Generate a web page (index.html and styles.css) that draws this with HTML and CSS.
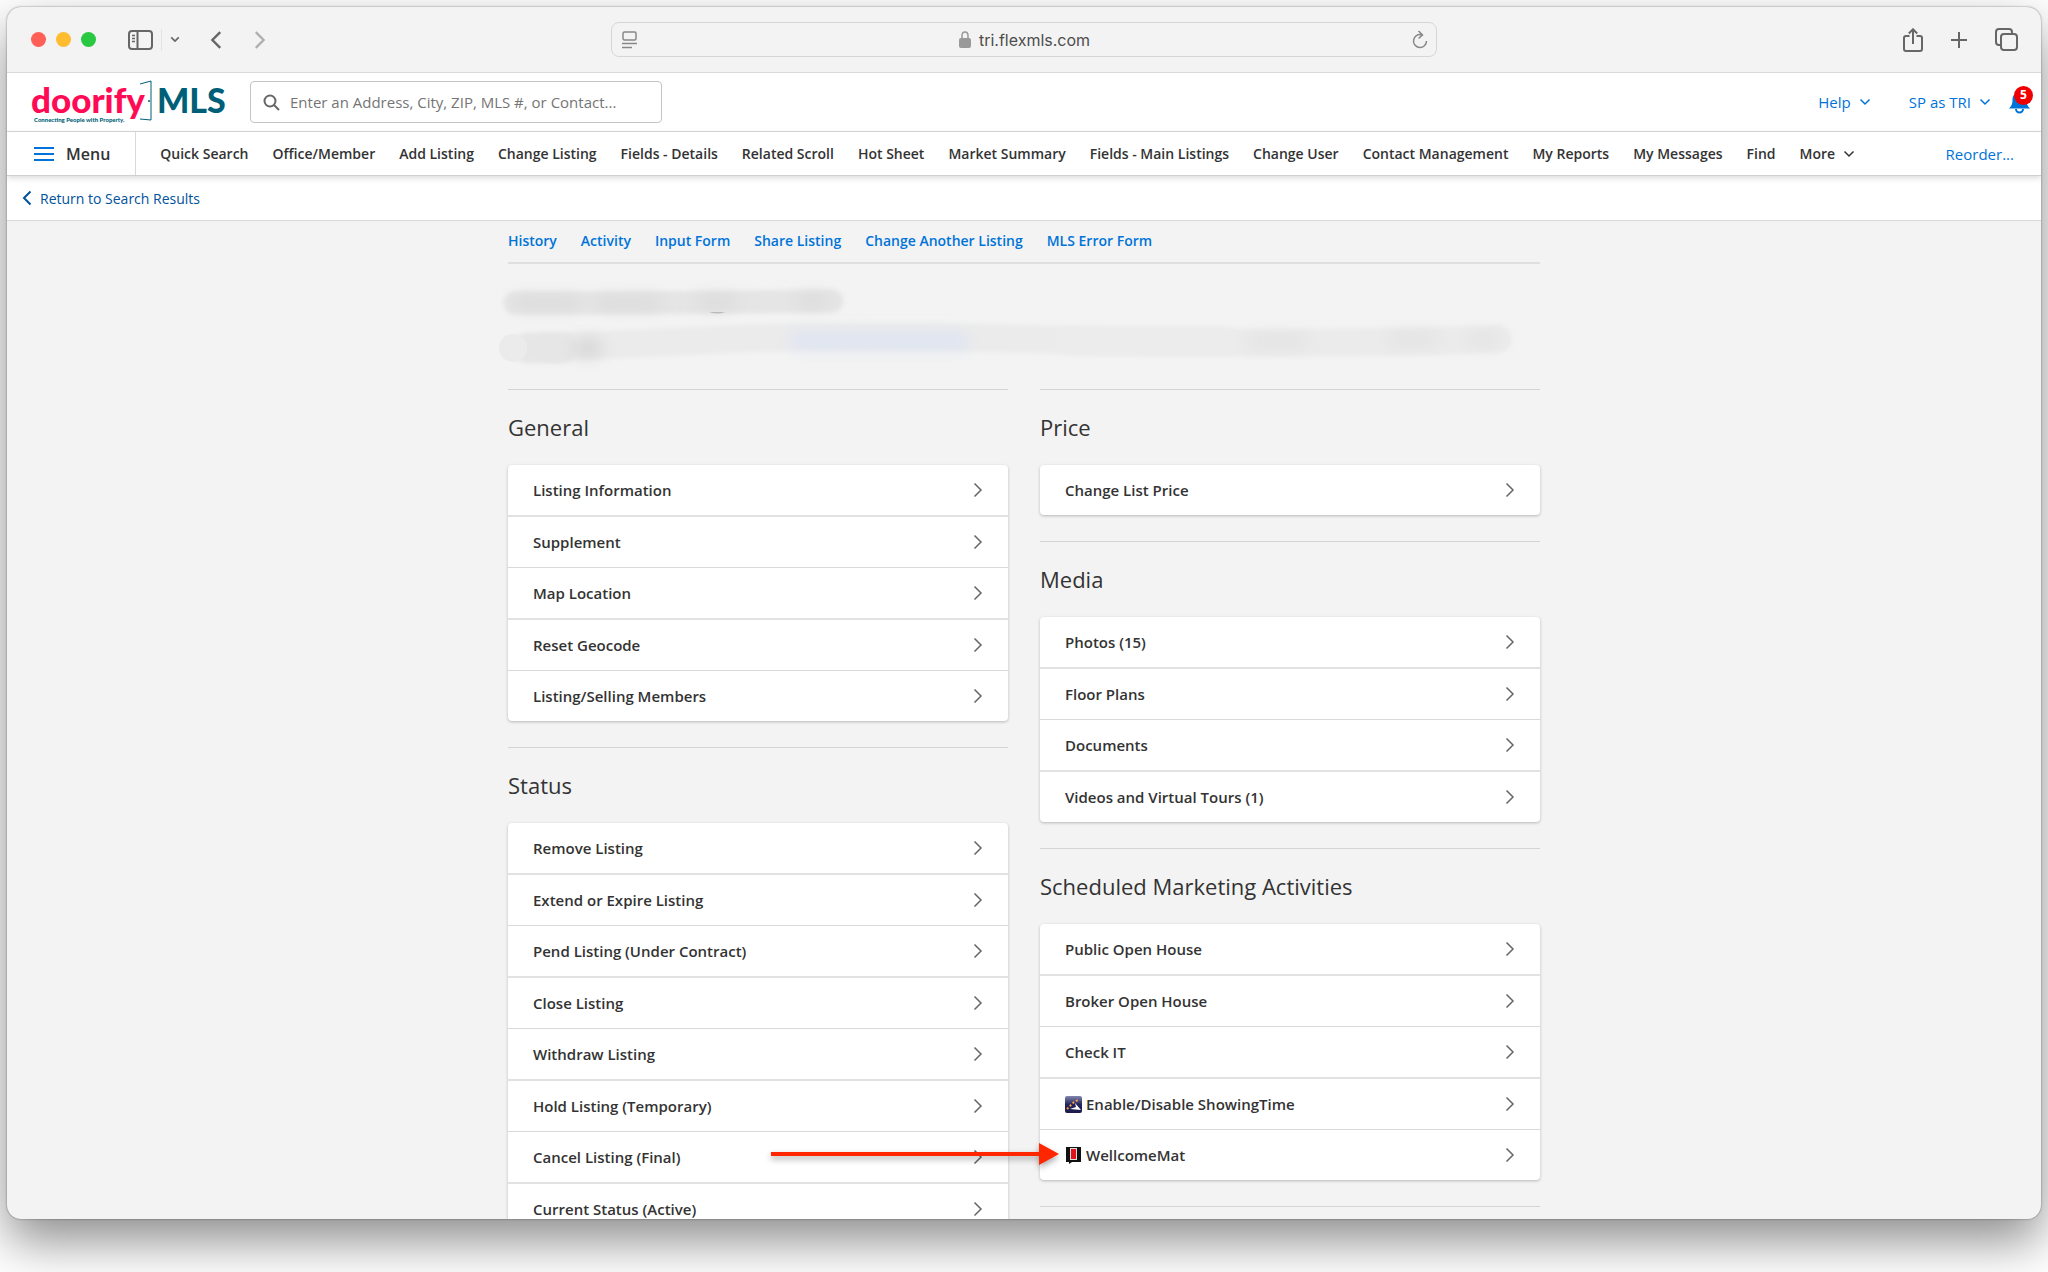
FILE: index.html
```html
<!DOCTYPE html>
<html lang="en">
<head>
  <meta charset="utf-8">
  <title>Flexmls - Change Listing</title>
  <meta name="viewport" content="width=device-width, initial-scale=1">
  <link rel="stylesheet" href="styles.css">
</head>
<body>
  <svg class="sprite" aria-hidden="true">
    <symbol id="chevron-right" viewBox="0 0 10 16"><path d="M1.5 1.5 8 8l-6.500 6.500" /></symbol>
    <symbol id="chevron-left" viewBox="0 0 10 16"><path d="M8.500 1.500 2 8l6.500 6.500" /></symbol>
    <symbol id="chevron-down" viewBox="0 0 12 8"><path d="M1.500 1.500 6 6l4.500-4.500" /></symbol>
  </svg>

  <div class="window">
    <div class="titlebar">
      <div class="titlebar-left">
        <div class="lights"><span class="close"></span><span class="minimize"></span><span class="zoom"></span></div>
        <button class="tool sidebar-button" aria-label="Show sidebar">
          <svg width="25" height="20" viewBox="0 0 25 20"><rect x="1" y="1" width="23" height="18" rx="3" /><path d="M9.500 1v18" /><path class="thin" d="M4 5.500h3M4 8.500h3M4 11.500h3" /></svg>
        </button>
        <button class="tool tab-menu" aria-label="Tab groups"><svg width="10" height="7" viewBox="0 0 12 8"><use href="#chevron-down" /></svg></button>
        <button class="tool back" aria-label="Back"><svg width="12" height="20" viewBox="0 0 10 16"><use href="#chevron-left" /></svg></button>
        <button class="tool forward" aria-label="Forward"><svg width="12" height="20" viewBox="0 0 10 16"><use href="#chevron-right" /></svg></button>
      </div>
      <div class="address">
        <button class="tool" aria-label="Page settings">
          <svg width="15" height="18" viewBox="0 0 15 18"><rect x="1" y="1" width="13" height="8" rx="1.500" /><path d="M0 12.500h15M0 16.500h10" /></svg>
        </button>
        <span class="host">
          <svg width="12" height="17" viewBox="0 0 12 17"><rect class="lock-body" y="7" width="12" height="10" rx="2" /><path d="M3 8V4.500a3 3.500 0 0 1 6 0V8" /></svg>
          tri.flexmls.com
        </span>
        <button class="tool" aria-label="Reload">
          <svg width="16" height="19" viewBox="0 0 16 19"><path d="M14.500 11A6.500 6.500 0 1 1 9.500 4.700M6.500 1l4 3.900-3.900 3.600" /></svg>
        </button>
      </div>
      <div class="titlebar-right">
        <button class="tool" aria-label="Share">
          <svg width="20" height="24" viewBox="0 0 20 24"><path d="M6.500 8H3a2 2 0 0 0-2 2v11a2 2 0 0 0 2 2h14a2 2 0 0 0 2-2V10a2 2 0 0 0-2-2h-3.500M10 16V1.500M5.800 5.500 10 1.300l4.200 4.200" /></svg>
        </button>
        <button class="tool" aria-label="New tab"><svg width="18" height="18" viewBox="0 0 18 18"><path d="M9 1v16M1 9h16" /></svg></button>
        <button class="tool" aria-label="Tab overview">
          <svg width="23" height="23" viewBox="0 0 23 23"><rect x="6" y="6" width="16" height="16" rx="3" /><path d="M6 17H4a3 3 0 0 1-3-3V4a3 3 0 0 1 3-3h10a3 3 0 0 1 3 3v2" /></svg>
        </button>
      </div>
    </div>

    <header class="app-header">
      <a class="logo" href="#" aria-label="Doorify MLS">
        <svg width="204" height="46" viewBox="0 0 204 46">
          <text class="logo-doorify" x="0" y="34">doorify</text>
          <text class="logo-mls" x="126" y="34">MLS</text>
          <text class="logo-tagline" x="3" y="43">Connecting People with Property.</text>
          <path class="logo-door" d="M109 5l11-3v39l-11-1" /><circle class="logo-knob" cx="118" cy="22" r="1" />
        </svg>
      </a>
      <label class="search">
        <svg width="17" height="17" viewBox="0 0 17 17"><circle cx="7" cy="7" r="5.500" /><path d="M11 11l5 5" /></svg>
        <input type="search" aria-label="Search" placeholder="Enter an Address, City, ZIP, MLS #, or Contact...">
      </label>
      <div class="account">
        <button>Help <svg class="thin" width="12" height="8"><use href="#chevron-down" /></svg></button>
        <button>SP as TRI <svg class="thin" width="12" height="8"><use href="#chevron-down" /></svg></button>
        <button class="bell" aria-label="Notifications">
          <svg width="21" height="24" viewBox="0 0 21 24"><path d="M10.500 1c1 0 1.500.6 1.500 1.500 3.600.8 5.500 3.600 5.500 7 0 4.500 1 6.500 3.500 9H0c2.500-2.500 3.500-4.500 3.500-9 0-3.400 2-6.200 5.500-7C9 1.600 9.500 1 10.500 1z" /><path class="clapper" d="M7 19a3.500 3.500 0 0 0 7 0" /></svg>
          <span class="badge">5</span>
        </button>
      </div>
    </header>

    <nav class="main-nav">
      <button class="menu-button"><svg width="20" height="14" viewBox="0 0 20 14"><path d="M0 1h20M0 7h20M0 13h20" /></svg>Menu</button>
      <div class="nav-links">
        <a href="#">Quick Search</a>
        <a href="#">Office/Member</a>
        <a href="#">Add Listing</a>
        <a href="#">Change Listing</a>
        <a href="#">Fields - Details</a>
        <a href="#">Related Scroll</a>
        <a href="#">Hot Sheet</a>
        <a href="#">Market Summary</a>
        <a href="#">Fields - Main Listings</a>
        <a href="#">Change User</a>
        <a href="#">Contact Management</a>
        <a href="#">My Reports</a>
        <a href="#">My Messages</a>
        <a href="#">Find</a>
        <button>More <svg class="thin" width="12" height="8"><use href="#chevron-down" /></svg></button>
      </div>
      <a class="reorder" href="#">Reorder...</a>
    </nav>

    <div class="return-bar">
      <a href="#"><svg width="10" height="16"><use href="#chevron-left" /></svg>Return to Search Results</a>
    </div>

    <main>
      <nav class="tabs">
        <a href="#">History</a>
        <a href="#">Activity</a>
        <a href="#">Input Form</a>
        <a href="#">Share Listing</a>
        <a href="#">Change Another Listing</a>
        <a href="#">MLS Error Form</a>
      </nav>

      <!-- address and agent details are smudged out -->
      <svg class="redacted" viewBox="0 -13 1032 125" aria-hidden="true">
        <defs>
          <filter id="soft" filterUnits="userSpaceOnUse" x="-30" y="-20" width="1090" height="140"><feGaussianBlur stdDeviation="2" /></filter>
          <filter id="softer" filterUnits="userSpaceOnUse" x="-30" y="-20" width="1090" height="140"><feGaussianBlur stdDeviation="8" /></filter>
        </defs>
        <path d="M7 26 Q170 26 324 24" stroke="#e5e5e5" stroke-width="23" filter="url(#soft)" />
        <g filter="url(#softer)" fill="#d9d9d9">
          <rect x="6" y="20" width="66" height="11" /><rect x="88" y="20" width="65" height="11" />
          <rect x="190" y="19" width="38" height="11" /><rect x="290" y="18" width="30" height="11" />
        </g>
        <path d="M201 35q9 3 16 0z" fill="#bbb" />
        <path d="M40 70 Q120 67 225 62 T560 63 T990 62" stroke="#ebebeb" stroke-width="28" filter="url(#soft)" />
        <path d="M288 64h166" stroke="#dce3f3" stroke-width="15" filter="url(#softer)" />
        <path d="M20 71h34" stroke="#e6e6e6" stroke-width="31" filter="url(#soft)" />
        <ellipse cx="80" cy="71" rx="15" ry="10" fill="#d6d6d6" filter="url(#softer)" />
        <circle cx="5" cy="71" r="14" fill="#ebebeb" />
        <path d="M562 64h155" stroke="#ececec" stroke-width="28" filter="url(#soft)" />
        <path d="M745 64h50M885 62h40M965 62h20" stroke="#e0e0e0" stroke-width="10" filter="url(#softer)" />
      </svg>

      <div class="columns">
        <div class="column">
          <section>
            <h2>General</h2>
            <ul class="card">
              <li><a href="#">Listing Information</a></li>
              <li><a href="#">Supplement</a></li>
              <li><a href="#">Map Location</a></li>
              <li><a href="#">Reset Geocode</a></li>
              <li><a href="#">Listing/Selling Members</a></li>
            </ul>
          </section>
          <section>
            <h2>Status</h2>
            <ul class="card">
              <li><a href="#">Remove Listing</a></li>
              <li><a href="#">Extend or Expire Listing</a></li>
              <li><a href="#">Pend Listing (Under Contract)</a></li>
              <li><a href="#">Close Listing</a></li>
              <li><a href="#">Withdraw Listing</a></li>
              <li><a href="#">Hold Listing (Temporary)</a></li>
              <li><a href="#">Cancel Listing (Final)</a></li>
              <li><a href="#">Current Status (Active)</a></li>
            </ul>
          </section>
        </div>
        <div class="column">
          <section>
            <h2>Price</h2>
            <ul class="card">
              <li><a href="#">Change List Price</a></li>
            </ul>
          </section>
          <section>
            <h2>Media</h2>
            <ul class="card">
              <li><a href="#">Photos (15)</a></li>
              <li><a href="#">Floor Plans</a></li>
              <li><a href="#">Documents</a></li>
              <li><a href="#">Videos and Virtual Tours (1)</a></li>
            </ul>
          </section>
          <section>
            <h2>Scheduled Marketing Activities</h2>
            <ul class="card">
              <li><a href="#">Public Open House</a></li>
              <li><a href="#">Broker Open House</a></li>
              <li><a href="#">Check IT</a></li>
              <li><a href="#">
                <svg class="app-icon" width="17" height="17" viewBox="0 0 17 17"><defs><linearGradient id="night" x2="0" y2="1"><stop stop-color="#8487b0" /><stop offset=".5" stop-color="#25245c" /><stop offset="1" stop-color="#1c1b4b" /></linearGradient></defs><rect width="17" height="17" rx="2" fill="url(#night)" /><path d="M2 13l3-3 4-4 4-2" stroke="#f2a33c" stroke-width="2" stroke-dasharray="2 2" /><path d="M5 13l6-2-1-4 6 7z" fill="#fff" /></svg>
                Enable/Disable ShowingTime</a></li>
              <li><a href="#">
                <svg class="app-icon" width="17" height="17" viewBox="0 0 17 17"><path d="M1 0h15v15H7l-3 2v-2H1z" fill="#111" /><rect x="5" y="1" width="7" height="12" fill="#ddd" /><rect x="6" y="2" width="5" height="10" fill="#e3131b" /></svg>
                WellcomeMat</a>
                <svg class="arrow" width="292" height="26" viewBox="0 0 292 26"><path d="M1 11h268V2l20 11-20 11v-9H1z" /></svg>
              </li>
            </ul>
          </section>
          <section></section>
        </div>
      </div>
    </main>
  </div>

  <script>
    // every row in a card ends with the same chevron
    document.querySelectorAll('.card a').forEach(function(link) {
      link.insertAdjacentHTML('beforeend', '<svg class="row-chevron thin" width="10" height="16"><use href="#chevron-right" /></svg>');
    });
  </script>
</body>
</html>
```
FILE: styles.css
```css
* {
  box-sizing: border-box;
}
body {
  margin: 0;
  height: 100vh;
  padding: 7px 7px 53px;
  overflow: hidden;
  background: #fff;
  font-family: "Open Sans", "Noto Sans", sans-serif;
  font-size: 15px;
  font-weight: 600;
  color: #333;
}
a {
  color: inherit;
  text-decoration: none;
}
button {
  padding: 0;
  border: none;
  background: none;
  color: inherit;
  font: inherit;
  cursor: pointer;
}
svg {
  flex: none;
  fill: none;
  stroke: currentColor;
  stroke-width: 2;
}
.sprite {
  display: none;
}
.thin {
  stroke-width: 1.5;
}
.window {
  height: 100%;
  overflow: hidden;
  border-radius: 14px;
  background: #f3f3f3;
  box-shadow: 0 0 2px rgba(0, 0, 0, 0.5), 0 22px 50px rgba(0, 0, 0, 0.45);
}

/* browser toolbar */
.titlebar {
  display: grid;
  grid-template-columns: 1fr 826px 1fr;
  align-items: center;
  height: 66px;
  border-bottom: 1px solid #d9d9d9;
  color: #666;
}
.titlebar-left,
.titlebar-right {
  display: flex;
  align-items: center;
}
.titlebar-left {
  padding-left: 24px;
}
.titlebar-right {
  justify-content: flex-end;
  gap: 27px;
  padding-right: 23px;
}
.tool {
  display: flex;
}
.lights {
  display: flex;
  gap: 10px;
  margin-right: 32px;
}
.lights span {
  width: 15px;
  height: 15px;
  border-radius: 50%;
}
.close {
  background: #ff5f57;
}
.minimize {
  background: #febc2e;
}
.zoom {
  background: #28c840;
}
.tab-menu {
  align-items: center;
  height: 22px;
  margin-left: 8px;
  padding-left: 8px;
  border-left: 1px solid #e2e2e2;
}
.back {
  margin-left: 30px;
}
.forward {
  margin-left: 32px;
  color: #b0b0b0;
}
.address {
  display: flex;
  align-items: center;
  justify-content: space-between;
  height: 35px;
  padding: 0 8px 0 10px;
  border: 1px solid #d6d6d6;
  border-radius: 8px;
  color: #888;
}
.address svg {
  stroke-width: 1.5;
}
.host {
  display: flex;
  align-items: center;
  gap: 8px;
  color: #4d4d4d;
  font-family: Inter, sans-serif;
  font-size: 16px;
  font-weight: 400;
}
.host svg {
  color: #999;
}
.lock-body {
  fill: #999;
  stroke: none;
}

/* app header */
.app-header {
  display: flex;
  align-items: center;
  height: 59px;
  padding: 0 8px 0 24px;
  border-bottom: 1px solid #d9d9d9;
  background: #fff;
}
.logo {
  display: flex;
  margin-right: 15px;
}
.logo text {
  stroke: none;
  font-family: Lato, sans-serif;
  font-weight: 900;
}
.logo .logo-doorify {
  fill: #ff0a54;
  font-size: 35px;
}
.logo .logo-mls {
  fill: #005f78;
  font-size: 34px;
}
.logo .logo-tagline {
  fill: #005f78;
  font-size: 6px;
}
.logo-door {
  stroke: #005f78;
  stroke-width: 1;
}
.logo-knob {
  fill: #005f78;
  stroke: none;
}
.search {
  display: flex;
  align-items: center;
  gap: 10px;
  width: 412px;
  height: 42px;
  padding: 0 12px;
  border: 1px solid #c4c4c4;
  border-radius: 4px;
}
.search svg {
  color: #666;
}
.search input {
  flex: 1;
  padding: 0;
  border: none;
  outline: none;
  background: none;
  font: inherit;
  font-weight: 400;
}
.search input::placeholder {
  color: #757575;
}
.account {
  display: flex;
  align-items: center;
  gap: 38px;
  margin-left: auto;
  color: #0073d9;
  font-weight: 500;
}
.account button,
.nav-links button {
  display: flex;
  align-items: center;
  gap: 8px;
}
.account .bell {
  position: relative;
  margin-left: -20px;
  padding-right: 3px;
}
.bell svg {
  fill: currentColor;
  stroke: none;
}
.bell .clapper {
  fill: none;
  stroke: currentColor;
}
.badge {
  position: absolute;
  top: -4px;
  right: 0;
  width: 19px;
  height: 19px;
  border-radius: 50%;
  background: #f00000;
  color: #fff;
  font-size: 12px;
  font-weight: 700;
  line-height: 18px;
}

/* navigation */
.main-nav {
  position: relative;
  display: flex;
  align-items: center;
  height: 44px;
  padding-right: 27px;
  border-bottom: 1px solid #d0d0d0;
  background: #fff;
  box-shadow: 0 2px 6px rgba(0, 0, 0, 0.15);
  font-size: 14px;
}
.menu-button {
  display: flex;
  align-items: center;
  gap: 12px;
  height: 100%;
  padding: 0 25px 0 27px;
  border-right: 1px solid #d9d9d9;
  font-size: 16px;
}
.menu-button svg {
  color: #0073d9;
}
.nav-links {
  display: flex;
  gap: 24px;
  margin-left: 24px;
}
.reorder {
  margin-left: auto;
  color: #0073d9;
  font-size: 15px;
  font-weight: 500;
}
.return-bar {
  display: flex;
  align-items: center;
  height: 45px;
  padding-left: 15px;
  border-bottom: 1px solid #d9d9d9;
  background: #fff;
  color: #00529b;
  font-size: 14px;
  font-weight: 500;
}
.return-bar a {
  display: flex;
  align-items: center;
  gap: 8px;
}

/* listing menu */
main {
  max-width: 1032px;
  margin: 0 auto;
}
.tabs {
  display: flex;
  gap: 24px;
  padding: 10px 0 11px;
  border-bottom: 2px solid #dfdfdf;
  color: #0073d9;
  font-size: 14px;
  line-height: 20px;
}
.redacted {
  display: block;
  width: 100%;
  overflow: visible;
  stroke: none;
  stroke-linecap: round;
}
.columns {
  display: grid;
  grid-template-columns: 1fr 1fr;
  gap: 32px;
}
section {
  border-top: 1px solid #d4d4d4;
  margin-bottom: 26px;
}
h2 {
  margin: 0;
  padding: 23px 0;
  font-size: 22px;
  font-weight: 500;
  line-height: 29px;
}
.card {
  margin: 0;
  padding: 0;
  border-radius: 4px;
  background: #fff;
  box-shadow: 0 1px 3px rgba(0, 0, 0, 0.25);
  list-style: none;
}
.card li {
  position: relative;
  border-bottom: 1px solid #d9d9d9;
}
.card li:nth-child(odd) {
  border-bottom: 2px solid #e2e2e2;
}
.card li:last-child {
  border-bottom: none;
}
.card a {
  display: flex;
  align-items: center;
  gap: 4px;
  padding: 15px 25px;
  line-height: 20px;
}
.app-icon {
  stroke: none;
}
.row-chevron {
  margin-left: auto;
  color: #666;
}
.arrow {
  position: absolute;
  top: 11px;
  left: -270px;
  z-index: 1;
  fill: #ff2600;
  stroke: none;
  filter: drop-shadow(0 3px 3px rgba(0, 0, 0, 0.35));
}
```
